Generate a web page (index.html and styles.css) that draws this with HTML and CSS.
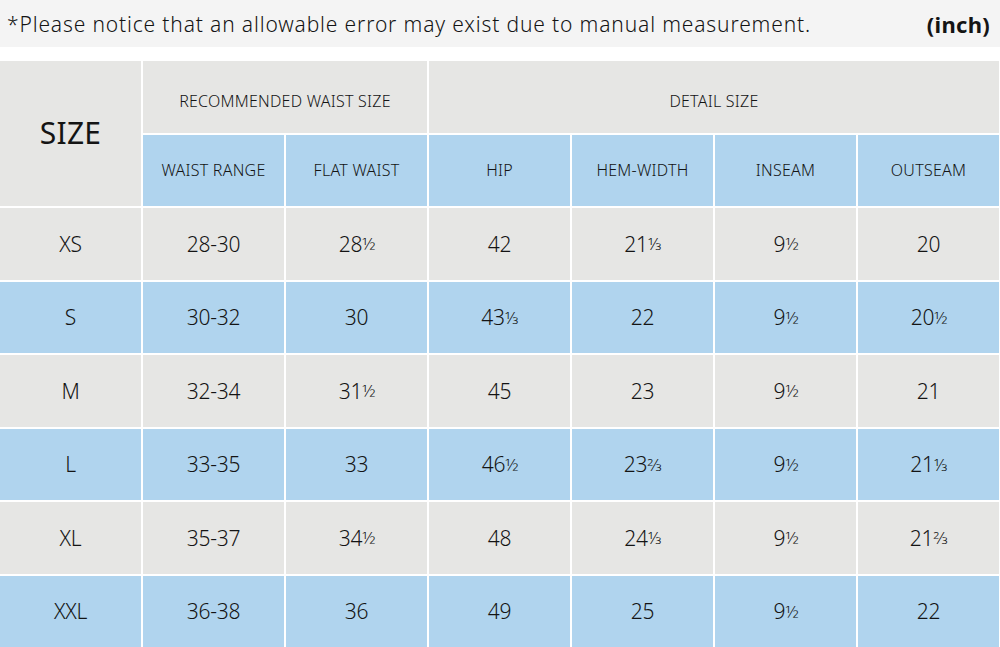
FILE: index.html
```html
<!DOCTYPE html>
<html lang="en">
<head>
<meta charset="utf-8">
<title>Size Chart</title>
<link rel="stylesheet" href="styles.css">
</head>
<body>
<div class="notice">
  <span class="notice-text">*Please notice that an allowable error may exist due to manual measurement.</span>
  <span class="unit">(inch)</span>
</div>
<div class="chart">
  <div class="cell gray size-head">SIZE</div>
  <div class="cell gray group span2">RECOMMENDED WAIST SIZE</div>
  <div class="cell gray group span4">DETAIL SIZE</div>
  <div class="cell blue label">WAIST RANGE</div>
  <div class="cell blue label">FLAT WAIST</div>
  <div class="cell blue label">HIP</div>
  <div class="cell blue label">HEM-WIDTH</div>
  <div class="cell blue label">INSEAM</div>
  <div class="cell blue label">OUTSEAM</div>

  <div class="cell gray">XS</div>
  <div class="cell gray">28-30</div>
  <div class="cell gray">28<span class="fr">½</span></div>
  <div class="cell gray">42</div>
  <div class="cell gray">21<span class="fr">⅓</span></div>
  <div class="cell gray">9<span class="fr">½</span></div>
  <div class="cell gray">20</div>

  <div class="cell blue">S</div>
  <div class="cell blue">30-32</div>
  <div class="cell blue">30</div>
  <div class="cell blue">43<span class="fr">⅓</span></div>
  <div class="cell blue">22</div>
  <div class="cell blue">9<span class="fr">½</span></div>
  <div class="cell blue">20<span class="fr">½</span></div>

  <div class="cell gray">M</div>
  <div class="cell gray">32-34</div>
  <div class="cell gray">31<span class="fr">½</span></div>
  <div class="cell gray">45</div>
  <div class="cell gray">23</div>
  <div class="cell gray">9<span class="fr">½</span></div>
  <div class="cell gray">21</div>

  <div class="cell blue">L</div>
  <div class="cell blue">33-35</div>
  <div class="cell blue">33</div>
  <div class="cell blue">46<span class="fr">½</span></div>
  <div class="cell blue">23<span class="fr">⅔</span></div>
  <div class="cell blue">9<span class="fr">½</span></div>
  <div class="cell blue">21<span class="fr">⅓</span></div>

  <div class="cell gray">XL</div>
  <div class="cell gray">35-37</div>
  <div class="cell gray">34<span class="fr">½</span></div>
  <div class="cell gray">48</div>
  <div class="cell gray">24<span class="fr">⅓</span></div>
  <div class="cell gray">9<span class="fr">½</span></div>
  <div class="cell gray">21<span class="fr">⅔</span></div>

  <div class="cell blue">XXL</div>
  <div class="cell blue">36-38</div>
  <div class="cell blue">36</div>
  <div class="cell blue">49</div>
  <div class="cell blue">25</div>
  <div class="cell blue">9<span class="fr">½</span></div>
  <div class="cell blue">22</div>
</div>
</body>
</html>
```
FILE: styles.css
```css
html, body {
  margin: 0;
  padding: 0;
  background: #ffffff;
}
body {
  width: 1000px;
  height: 647px;
  overflow: hidden;
  font-family: "Noto Sans", "Open Sans", sans-serif;
  font-weight: 300;
  color: #141414;
}
.notice {
  height: 47px;
  background: #f4f4f4;
  display: flex;
  align-items: center;
  justify-content: space-between;
  padding: 0 10px 0 7px;
  margin-bottom: 14px;
}
.notice-text {
  font-size: 21px;
  letter-spacing: 0.85px;
}
.unit {
  font-size: 22px;
  font-weight: 700;
  letter-spacing: 0.3px;
}
.chart {
  display: grid;
  grid-template-columns: repeat(7, 141px);
  grid-template-rows: repeat(8, 1fr);
  gap: 2px;
  width: 999px;
  height: 586px;
}
.cell {
  display: flex;
  align-items: center;
  justify-content: center;
  font-size: 21px;
  letter-spacing: -0.2px;
}
.gray { background: #e6e6e4; }
.blue { background: #b0d4ee; }
.size-head {
  grid-row: span 2;
  font-size: 30px;
  font-weight: 400;
  letter-spacing: 0.3px;
  padding-bottom: 2px;
}
.span2 { grid-column: span 2; }
.span4 { grid-column: span 4; }
.group, .label {
  font-size: 16px;
  letter-spacing: 0.25px;
}
.group {
  padding-top: 8px;
}
.fr {
  font-size: 0.82em;
  letter-spacing: -1px;
}
```
